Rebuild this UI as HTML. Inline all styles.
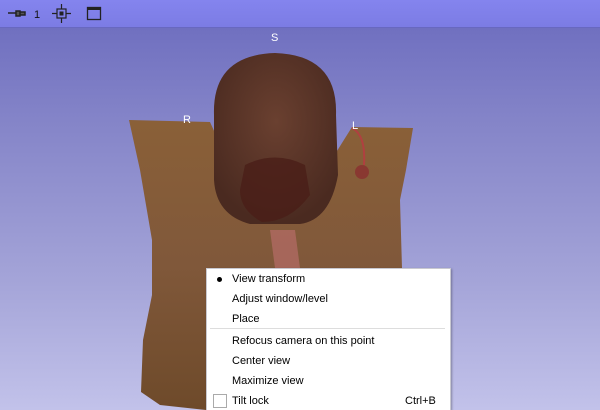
<!DOCTYPE html>
<html style="background:#b0b0e0"><head><style>
html,body{margin:0;width:600px;height:410px;overflow:hidden;}
body{position:relative;font-family:"Liberation Sans",sans-serif;background:linear-gradient(#7070c0 28px,#8484c8 120px,#a4a4d8 280px,#c2c2ea 410px) no-repeat;background-size:600px 410px;}
.tb{position:absolute;left:0;top:0;width:600px;height:27px;background:linear-gradient(#8484ee,#7c7ce4);border-bottom:1px solid #6868c0;}
.menu{position:absolute;left:206px;top:268px;width:243px;height:141px;background:#fff;border:1px solid #c8c8d0;border-bottom:none;box-shadow:1px 1px 2px rgba(0,0,0,.3);font-size:11px;color:#000;}
.it{position:absolute;left:25px;}
.lbl{position:absolute;color:#fff;font-size:11px;}
</style></head><body>
<svg width="600" height="410" style="position:absolute;left:0;top:0">
<defs>
<linearGradient id="t" x1="0" y1="0" x2="0" y2="1"><stop offset="0" stop-color="#8a6038"/><stop offset=".5" stop-color="#80583a"/><stop offset="1" stop-color="#6e4a2a"/></linearGradient>
<radialGradient id="h" cx=".5" cy=".4" r=".6"><stop offset="0" stop-color="#6a4030"/><stop offset="1" stop-color="#4a2a20"/></radialGradient>
</defs>
<path d="M129,120 L210,122 L250,210 L300,210 L352,127 L413,128 L406,170 L400,200 L402,268 L206,268 L206,410 L160,405 L141,392 L143,340 L152,295 L152,240 L140,170 Z" fill="url(#t)"/>
<path d="M214,115 Q212,55 275,53 Q338,55 336,115 L338,175 Q330,220 300,224 L250,224 Q216,215 214,180 Z" fill="url(#h)"/>
<path d="M245,165 Q275,150 305,165 L310,195 Q290,222 262,222 Q240,210 240,190 Z" fill="#4a1e18" opacity=".8"/>
<path d="M270,230 L295,230 L300,268 L275,268 Z" fill="#c07070" opacity=".6"/>
<circle cx="362" cy="172" r="7" fill="#8a3030" opacity=".8"/>
<path d="M352,128 Q366,135 364,165" stroke="#b04040" stroke-width="2" fill="none"/>
</svg>
<div class="lbl" style="left:271px;top:32px">S</div>
<div class="lbl" style="left:183px;top:114px">R</div>
<div class="lbl" style="left:352px;top:120px">L</div>
<div class="tb">
<svg width="150" height="27" style="position:absolute;left:0;top:0">
<path d="M8,13 h8 M16,11 h4 v5 h-4z M20,12 h5 v3 h-5z" stroke="#222" stroke-width="1.5" fill="#555"/>
<text x="34" y="18" font-size="11" font-family="Liberation Sans" fill="#111">1</text>
<rect x="57" y="9" width="9" height="9" fill="none" stroke="#222" stroke-width="1.2"/>
<rect x="59.5" y="11.5" width="4" height="4" fill="#222"/>
<path d="M61.5,4 v5 M61.5,18 v5 M52,13.5 h5 M66,13.5 h5" stroke="#222" stroke-width="1.2"/>
<rect x="87.5" y="7.5" width="13" height="12" fill="none" stroke="#222" stroke-width="1.3"/>
<rect x="87" y="7" width="14" height="3" fill="#222"/>
</svg>
</div>
<div class="menu">
<div style="position:absolute;left:10px;top:8px;width:5px;height:5px;border-radius:50%;background:#000"></div>
<div class="it" style="top:4px">View transform</div>
<div class="it" style="top:24px">Adjust window/level</div>
<div class="it" style="top:44px">Place</div>
<div style="position:absolute;left:3px;right:5px;top:59px;height:1px;background:#ddd"></div>
<div class="it" style="top:66px">Refocus camera on this point</div>
<div class="it" style="top:86px">Center view</div>
<div class="it" style="top:106px">Maximize view</div>
<div style="position:absolute;left:6px;top:125px;width:12px;height:12px;border:1px solid #aaa"></div>
<div class="it" style="top:126px">Tilt lock</div>
<div style="position:absolute;left:198px;top:126px">Ctrl+B</div>
</div>
</body></html>
